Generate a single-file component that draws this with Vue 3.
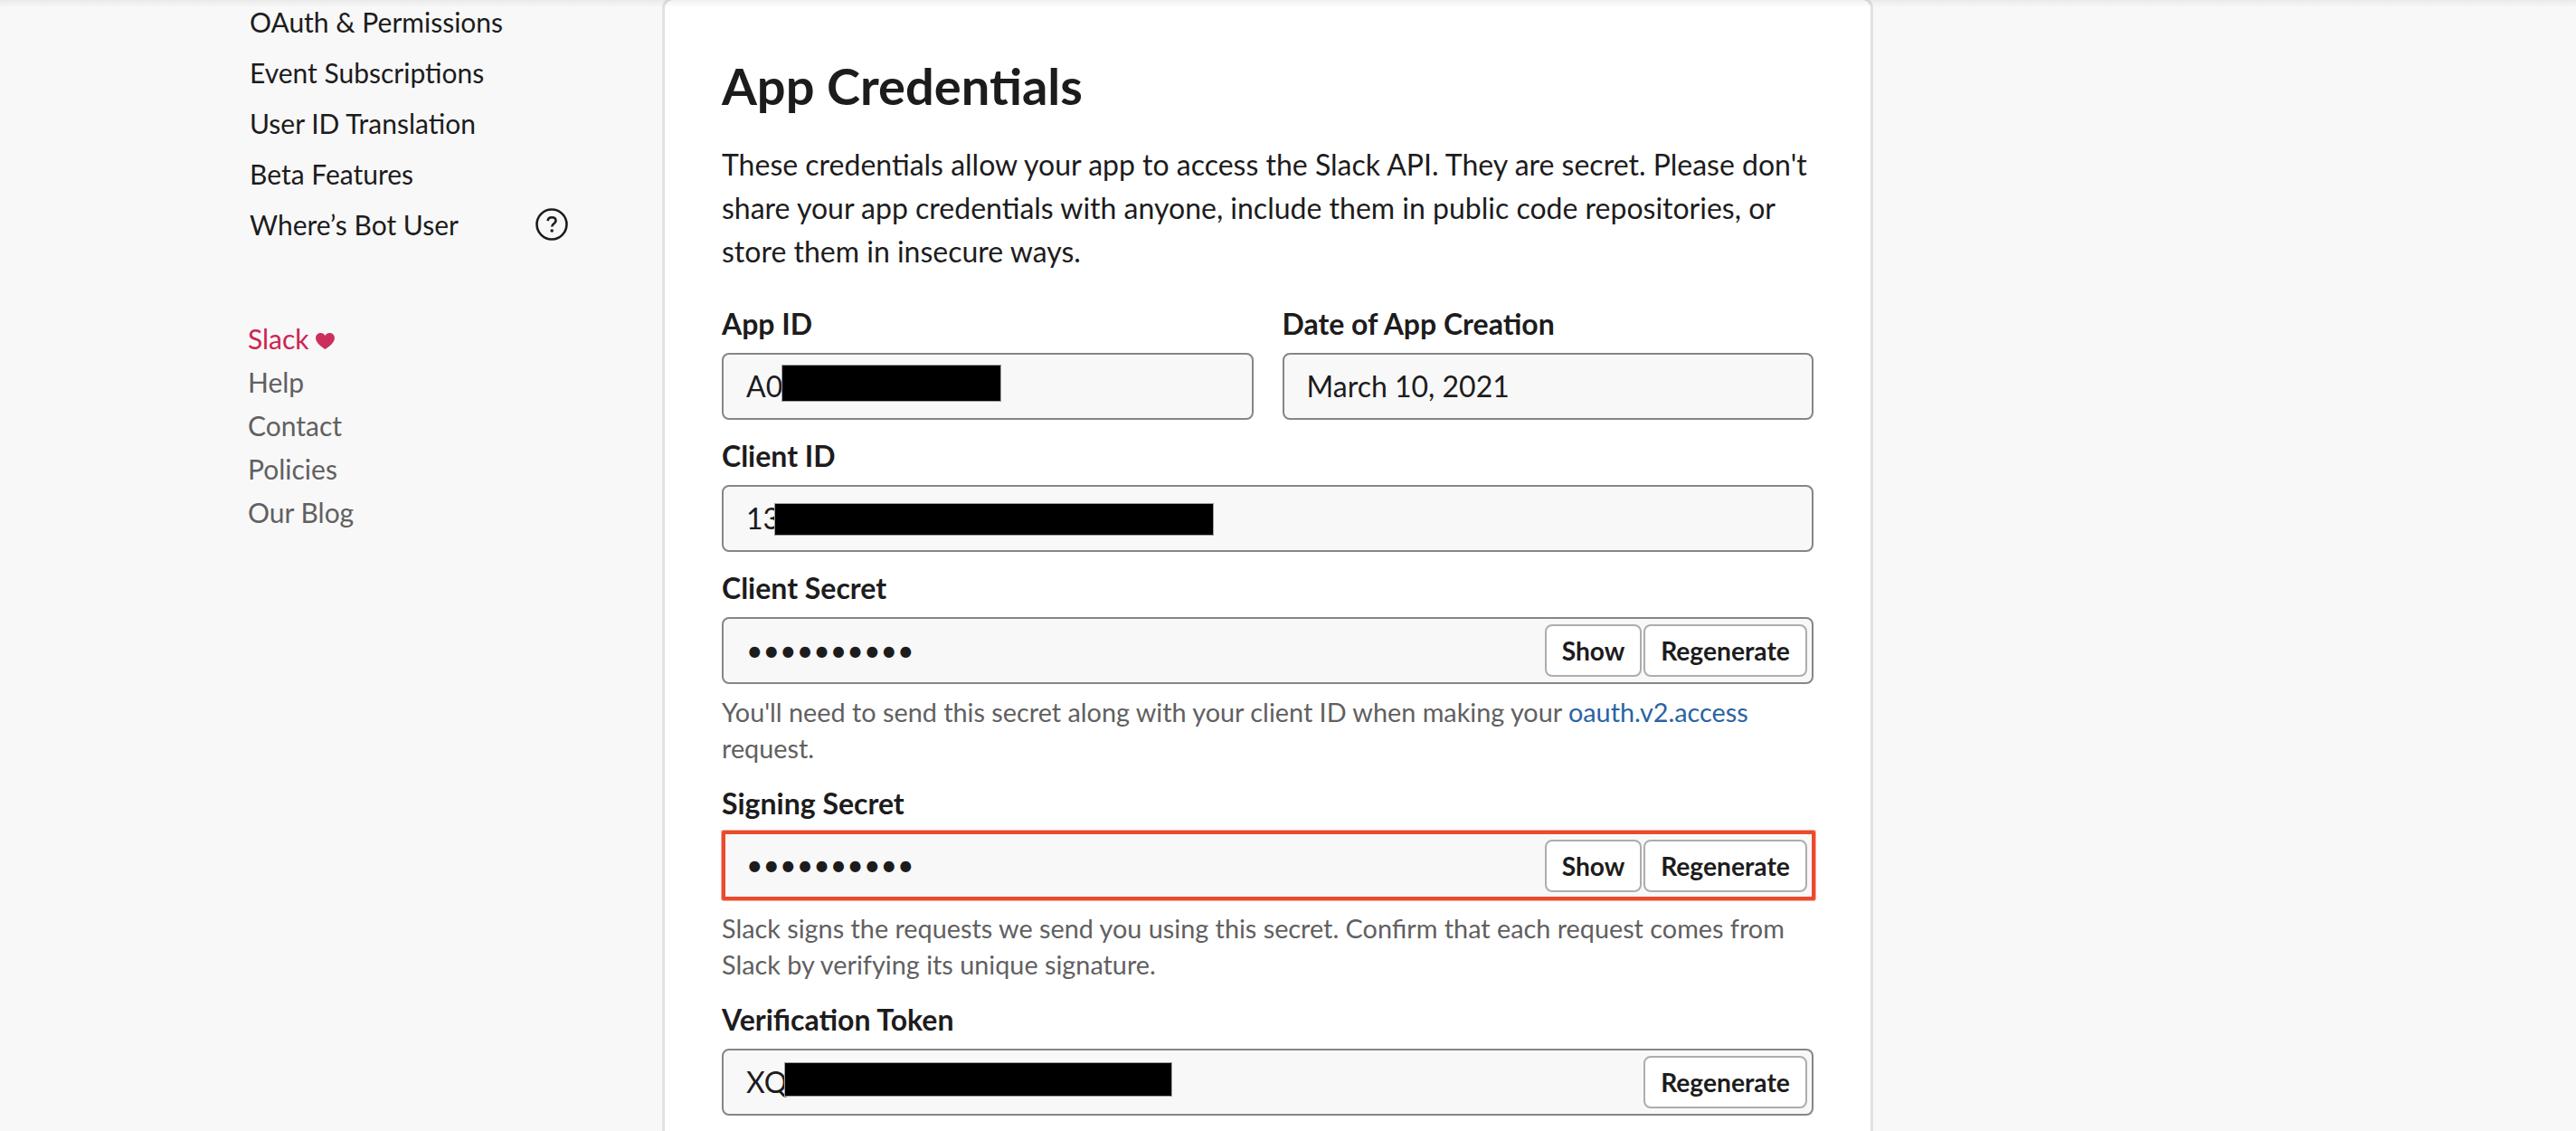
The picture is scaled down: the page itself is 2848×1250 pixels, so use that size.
<script setup>
const navItems = ['OAuth & Permissions', 'Event Subscriptions', 'User ID Translation', 'Beta Features']
const footerLinks = ['Help', 'Contact', 'Policies', 'Our Blog']
const dots = '••••••••••'
</script>

<template>
  <div class="page">
    <aside class="sidebar">
      <nav class="nav">
        <a v-for="item in navItems" :key="item" class="nav-item">{{ item }}</a>
        <a class="nav-item nav-help">
          <span>Where’s Bot User</span>
          <svg class="help-icon" viewBox="0 0 36 36" width="36" height="36" aria-hidden="true">
            <circle cx="18" cy="18" r="16.5" fill="none" stroke="#1d1c1d" stroke-width="2.6" />
            <path d="M13.6 14.2c.2-2.6 2-4 4.5-4 2.6 0 4.4 1.500 4.400 3.700 0 3.400-4.300 3.300-4.300 6.600" fill="none" stroke="#1d1c1d" stroke-width="2.6" />
            <circle cx="18.2" cy="25" r="1.8" fill="#1d1c1d" />
          </svg>
        </a>
      </nav>
      <div class="foot">
        <a class="foot-brand">Slack <svg class="heart" viewBox="0 0 22 19" width="21" height="18" aria-hidden="true"><path d="M11 19C4.500 14.500 0 10.700 0 5.800 0 2.500 2.500 0 5.700 0 8 0 10 1.200 11 3.200 12 1.200 14 0 16.300 0 19.500 0 22 2.500 22 5.800 22 10.700 17.500 14.500 11 19z" fill="#cd2f5c" /></svg></a>
        <a v-for="link in footerLinks" :key="link" class="foot-link">{{ link }}</a>
      </div>
    </aside>

    <main class="card">
      <h1 class="title">App Credentials</h1>
      <p class="intro">These credentials allow your app to access the Slack API. They are secret. Please don't share your app credentials with anyone, include them in public code repositories, or store them in insecure ways.</p>

      <div class="two">
        <div>
          <label class="label">App ID</label>
          <div class="field">
            <span class="val">A0<i class="redact r-app"></i></span>
          </div>
        </div>
        <div>
          <label class="label">Date of App Creation</label>
          <div class="field"><span class="val">March 10, 2021</span></div>
        </div>
      </div>

      <label class="label">Client ID</label>
      <div class="field"><span class="val">13<i class="redact r-client"></i></span></div>

      <label class="label">Client Secret</label>
      <div class="field">
        <span class="val dots">{{ dots }}</span>
        <button class="btn btn-show">Show</button>
        <button class="btn">Regenerate</button>
      </div>
      <p class="help">You'll need to send this secret along with your client ID when making your <a class="link">oauth.v2.access</a> request.</p>

      <label class="label label-tight">Signing Secret</label>
      <div class="field field-hot">
        <span class="val dots">{{ dots }}</span>
        <button class="btn btn-show">Show</button>
        <button class="btn">Regenerate</button>
      </div>
      <p class="help">Slack signs the requests we send you using this secret. Confirm that each request comes from Slack by verifying its unique signature.</p>

      <label class="label label-tight">Verification Token</label>
      <div class="field">
        <span class="val">XQ<i class="redact r-token"></i></span>
        <button class="btn">Regenerate</button>
      </div>
    </main>
  </div>
</template>

<style>
html, body { margin: 0; background: #f8f8f8; overflow: hidden; }
</style>

<style scoped>
.page {
  position: relative;
  display: flex;
  width: 2848px;
  height: 1250px;
  overflow: hidden;
  background: #f8f8f8;
  font-family: Lato, "Open Sans", sans-serif;
  color: #1d1c1d;
}
.page::after {
  content: "";
  position: absolute;
  left: 0;
  right: 0;
  top: 0;
  height: 8px;
  background: linear-gradient(rgba(0,0,0,.06), rgba(0,0,0,0));
}
.sidebar {
  width: 732px;
  flex: none;
  box-sizing: border-box;
  padding-left: 274px;
}
.nav { display: flex; flex-direction: column; margin: -4px 0 0 2px; }
.nav-item { height: 56px; line-height: 56px; font-size: 30px; color: #1d1c1d; }
.nav-help { display: flex; align-items: center; gap: 85px; }
.foot { display: flex; flex-direction: column; margin-top: 74px; }
.foot-brand, .foot-link { height: 48px; line-height: 48px; font-size: 30px; }
.foot-brand { color: #cd2553; }
.foot-link { color: #616061; }
.heart { vertical-align: 0; }
.card {
  width: 1339px;
  height: 1290px;
  flex: none;
  box-sizing: border-box;
  background: #fff;
  border: 3px solid #e2e2e2;
  border-radius: 12px;
  margin-top: -3px;
  padding: 60px 63px 0;
}
.title { margin: 0; font-size: 56px; line-height: 70px; font-weight: 700; }
.intro { margin: 28px 0 0; font-size: 32px; line-height: 48px; }
.two { display: grid; grid-template-columns: 1fr 1fr; gap: 32px; margin-top: 34px; }
.two .label { margin-top: 0; }
.label { display: block; margin-top: 18px; font-size: 32px; line-height: 44px; font-weight: 700; }
.help + .label-tight { margin-top: 19px; }
.field {
  display: flex;
  align-items: center;
  gap: 2px;
  box-sizing: border-box;
  height: 74px;
  margin-top: 10px;
  padding: 0 5px 0 25px;
  border: 2px solid #868686;
  border-radius: 8px;
  background: #f8f8f8;
  font-size: 32px;
}
.field-hot {
  height: 77px;
  margin: 8px -2px 0 0;
  padding: 0 5px 0 23px;
  border: 4px solid #eb4a2c;
  border-radius: 2px;
  box-shadow: 0 0 0 1px rgba(235, 74, 44, .45);
}
.val { flex: 1; position: relative; white-space: nowrap; align-self: stretch; display: flex; align-items: center; padding-bottom: 2px; box-sizing: border-box; }
.redact { position: absolute; background: #000; outline: 1px solid #a0a0a0; outline-offset: -1px; }
.r-app { left: 39px; top: calc(50% - 24px); width: 243px; height: 41px; }
.r-client { left: 31px; top: calc(50% - 17px); width: 486px; height: 36px; }
.r-token { left: 42px; top: calc(50% - 22px); width: 429px; height: 38px; }
.btn {
  box-sizing: border-box;
  height: 58px;
  width: 181px;
  padding: 0;
  border: 2px solid #adadad;
  border-radius: 8px;
  background: #fff;
  color: #1d1c1d;
  font-family: inherit;
  font-size: 28.2px;
  font-weight: 700;
}
.btn-show { width: 107px; }
.help { margin: 11px 0 0; font-size: 28.8px; line-height: 40px; color: #616061; }
.link { color: #2a63a3; }
</style>
